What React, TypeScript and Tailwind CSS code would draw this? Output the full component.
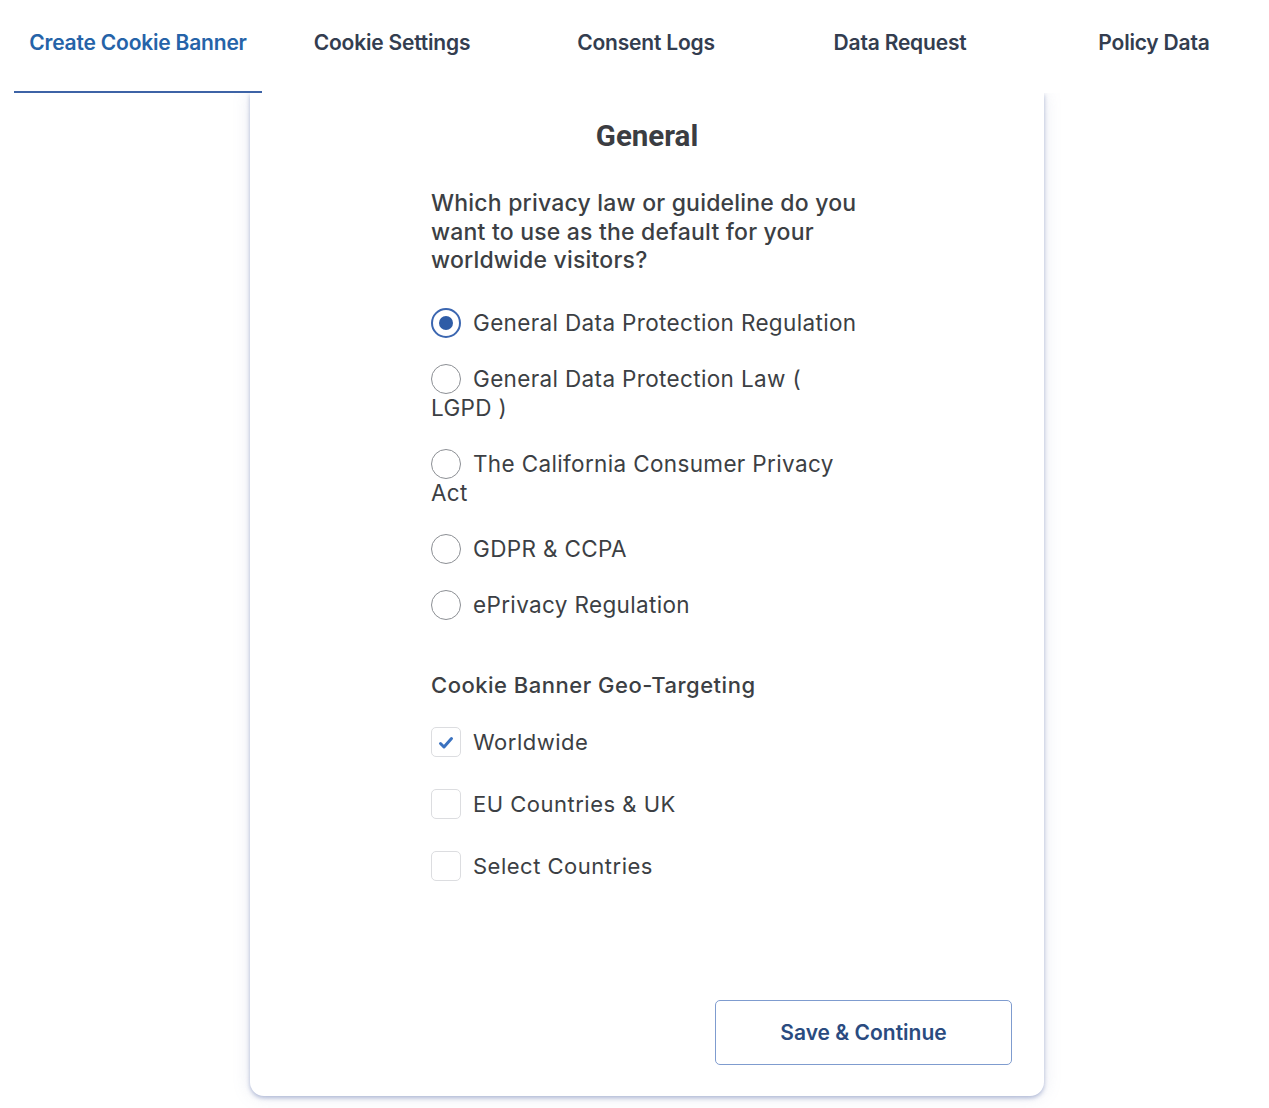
import { useState } from 'react';

const tabs = ['Create Cookie Banner', 'Cookie Settings', 'Consent Logs', 'Data Request', 'Policy Data'];

const laws = [
  'General Data Protection Regulation',
  'General Data Protection Law ( LGPD )',
  'The California Consumer Privacy Act',
  'GDPR & CCPA',
  'ePrivacy Regulation',
];

const regions = ['Worldwide', 'EU Countries & UK', 'Select Countries'];

export default function App() {
  const [law, setLaw] = useState(0);
  const [geo, setGeo] = useState<Record<string, boolean>>({ Worldwide: true });

  return (
    <div className="min-h-[1108px] bg-white font-['Inter',sans-serif] overflow-hidden">
      {/* Tab bar */}
      <div className="relative z-10 flex h-[93px] bg-white pl-[14px] gap-[6px]">
        {tabs.map((tab, i) => (
          <button
            key={tab}
            className={`shrink-0 w-[248px] h-full pb-[6px] flex items-center justify-center text-[21px] font-semibold tracking-[-0.2px] border-b-2 ${
              i === 0 ? 'text-[#2563a8] border-[#3d63a6]' : 'text-[#333d4f] border-transparent'
            }`}
          >
            {tab}
          </button>
        ))}
      </div>

      {/* Card */}
      <div className="ml-[250px] w-[794px] h-[1003px] bg-white rounded-b-[14px] shadow-[0_2px_4px_rgba(90,110,170,0.45),0_0_18px_rgba(120,135,180,0.18)] flex flex-col text-[#3c3f44]">
        <h2 className="mt-[26px] text-center text-[29.5px] leading-[34px] font-bold font-['Roboto',sans-serif] text-[#3b3d42]">
          General
        </h2>

        <div className="w-[432px] mx-auto mt-[36px]">
          <p className="text-[23px] leading-[28.5px] font-medium tracking-[0.2px] text-[#3c3f44]">
            Which privacy law or guideline do you want to use as the default for your worldwide visitors?
          </p>

          <div className="mt-[33px]">
            {laws.map((l, i) => (
              <label key={l} className="block text-[22.5px] leading-[29px] tracking-[0.35px] mb-[27px] cursor-pointer">
                <span
                  onClick={() => setLaw(i)}
                  className={`inline-flex align-middle -mt-[4px] -my-[2px] mr-[12px] w-[30px] h-[30px] rounded-full items-center justify-center ${
                    law === i ? 'border-[2px] border-[#3b66b0]' : 'border-[1.5px] border-[#8c8f94]'
                  }`}
                >
                  {law === i && <span className="w-[14px] h-[14px] rounded-full bg-[#2e5ca6]" />}
                </span>
                {l}
              </label>
            ))}
          </div>

          <h3 className="mt-[52px] text-[22px] leading-[28px] font-medium tracking-[0.5px] text-[#3c3f44]">
            Cookie Banner Geo-Targeting
          </h3>

          <div className="mt-[28px] flex flex-col gap-[32px]">
            {regions.map((r) => (
              <label key={r} className="flex items-center gap-[12px] text-[22px] leading-[30px] tracking-[0.5px] cursor-pointer">
                <span
                  onClick={() => setGeo({ ...geo, [r]: !geo[r] })}
                  className="w-[30px] h-[30px] rounded-[5px] border border-[#dcdde0] flex items-center justify-center shrink-0"
                >
                  {geo[r] && (
                    <svg width="20" height="20" viewBox="0 0 20 20" fill="none" className="mt-[3px]">
                      <path d="M4.5 10.5l3.5 3.5 7.5-8.5" stroke="#3a72c0" strokeWidth="3" strokeLinecap="round" strokeLinejoin="round" />
                    </svg>
                  )}
                </span>
                {r}
              </label>
            ))}
          </div>
        </div>

        <div className="mt-auto mb-[31px] mr-[32px] flex justify-end">
          <button className="w-[297px] h-[65px] rounded-[5px] border-[1.5px] border-[#7f9ccf] text-[21px] font-semibold text-[#2a4b80]">
            Save &amp; Continue
          </button>
        </div>
      </div>
    </div>
  );
}
